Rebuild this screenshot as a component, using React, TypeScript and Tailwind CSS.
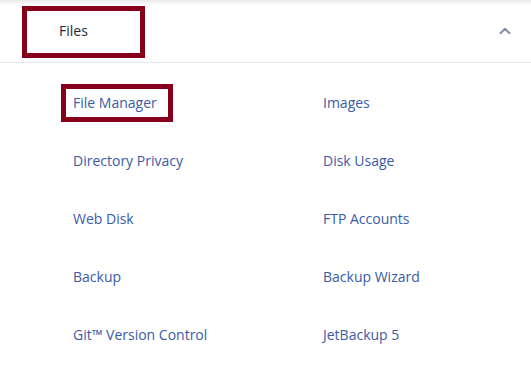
import { ChevronUp } from 'lucide-react';

const links = [
  ['File Manager', 'Images'],
  ['Directory Privacy', 'Disk Usage'],
  ['Web Disk', 'FTP Accounts'],
  ['Backup', 'Backup Wizard'],
  ['Git™ Version Control', 'JetBackup 5'],
];

export default function App() {
  return (
    <div className="w-[531px] h-[366px] bg-white overflow-hidden" style={{ fontFamily: '"Open Sans", sans-serif' }}>
      {/* top shadow */}
      <div className="h-[5px] bg-gradient-to-b from-[#e9e9e9] to-white" />

      {/* Section header */}
      <div className="flex items-start justify-between h-[58px] pl-[22px] pr-[17px] border-b border-[#e4e8f0]">
        <div className="mt-[1px] w-[123px] h-[52px] border-[5px] border-[#86001b] flex items-center pl-[32px] pb-[3px] text-[14px] text-[#1e2a3b]">
          Files
        </div>
        <ChevronUp className="mt-[17px] w-[18px] h-[18px] text-[#8590a8]" strokeWidth={2.6} />
      </div>

      {/* Links */}
      <div className="grid grid-cols-[250px_1fr] pl-[73px] pt-[11px]">
        {links.map(([a, b], i) => (
          <div key={i} className="contents">
            <div className="h-[58px] flex items-center">
              {i === 0 ? (
                <a className="-ml-[12px] border-[5px] border-[#86001b] pl-[7px] pr-[11px] py-[4px] leading-[20px] text-[14px] text-[#3b5ba5]">
                  {a}
                </a>
              ) : (
                <a className="text-[14px] leading-[20px] text-[#3b5ba5]">{a}</a>
              )}
            </div>
            <div className="h-[58px] flex items-center">
              <a className="text-[14px] leading-[20px] text-[#3b5ba5]">{b}</a>
            </div>
          </div>
        ))}
      </div>
    </div>
  );
}
